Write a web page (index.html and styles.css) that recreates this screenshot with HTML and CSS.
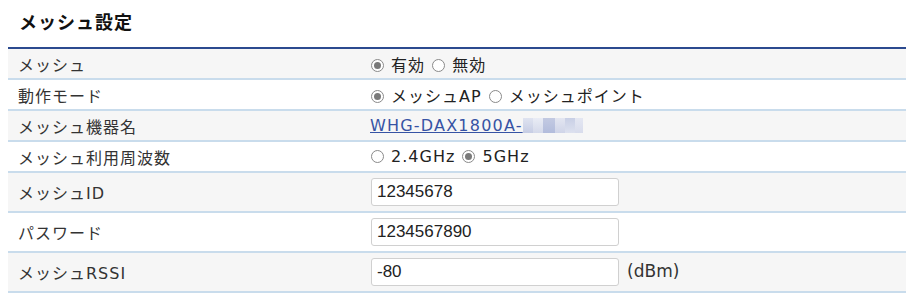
FILE: index.html
```html
<!DOCTYPE html>
<html lang="ja">
  <head>
    <meta charset="UTF-8" />
    <meta name="viewport" content="width=device-width, initial-scale=1.0" />
    <title>メッシュ設定</title>
    <link rel="stylesheet" href="styles.css">
  </head>
  <body>
    <h2 class="titel">メッシュ設定</h2>
    <table class="indstillinger">
      <tr class="lys">
        <th>メッシュ</th>
        <td>
          <label><input type="radio" name="mesh" checked /> 有効</label>
          <label><input type="radio" name="mesh" /> 無効</label>
        </td>
      </tr>
      <tr>
        <th>動作モード</th>
        <td>
          <label><input type="radio" name="mode" checked /> メッシュAP</label>
          <label><input type="radio" name="mode" /> メッシュポイント</label>
        </td>
      </tr>
      <tr class="lys">
        <th>メッシュ機器名</th>
        <td>
          <a href="#" class="link">WHG-DAX1800A-</a><span class="sloret"><i class="a"></i><i class="b"></i><i class="c"></i><i class="d"></i><i class="e"></i><i class="f"></i></span>
        </td>
      </tr>
      <tr>
        <th>メッシュ利用周波数</th>
        <td>
          <label><input type="radio" name="band" /> 2.4GHz</label>
          <label><input type="radio" name="band" checked /> 5GHz</label>
        </td>
      </tr>
      <tr class="lys hoj">
        <th>メッシュID</th>
        <td><input type="text" class="felt" value="12345678" /></td>
      </tr>
      <tr class="hoj">
        <th>パスワード</th>
        <td><input type="text" class="felt" value="1234567890" /></td>
      </tr>
      <tr class="lys hoj">
        <th>メッシュRSSI</th>
        <td><input type="text" class="felt" value="-80" /> <span class="enhed">(dBm)</span></td>
      </tr>
    </table>
  </body>
</html>
```

FILE: styles.css
```css
body {
  margin: 0;
  padding: 8px 0 0 8px;
  background-color: #ffffff;
  color: #222222;
  font-family: "DejaVu Sans", "Noto Sans CJK JP", sans-serif;
  font-size: 16px;
}
.titel {
  margin: 0 0 13px 11px;
  font-family: "Noto Sans CJK JP", sans-serif;
  font-size: 18px;
  letter-spacing: 1px;
  font-weight: bold;
  line-height: 26px;
  color: #111111;
}
.indstillinger {
  width: 898px;
  border-collapse: collapse;
  border-top: 2px solid #2b4a8f;
}
.indstillinger tr {
  height: 31px;
  border-bottom: 2px solid #c9dcec;
}
.indstillinger tr.hoj {
  height: 40px;
}
.indstillinger tr.lys {
  background-color: #f6f6f6;
}
th {
  width: 352px;
  padding: 0 0 0 10px;
  text-align: left;
  font-weight: normal;
  letter-spacing: 1px;
  color: #333333;
}
td {
  padding: 0;
  color: #222222;
}
label {
  margin-right: 1px;
  letter-spacing: 1px;
}
input[type="radio"] {
  appearance: none;
  width: 13px;
  height: 13px;
  margin: 0 1px 0 1px;
  border: 1px solid #8a8a8a;
  border-radius: 50%;
  background-color: #ffffff;
  vertical-align: -1px;
  position: relative;
}
input[type="radio"]:checked::after {
  content: "";
  position: absolute;
  left: 2px;
  top: 2px;
  width: 7px;
  height: 7px;
  border-radius: 50%;
  background-color: #7a7a7a;
}
.link {
  color: #3653a4;
  text-decoration: underline;
  letter-spacing: 1.2px;
}
.sloret {
  display: inline-flex;
  vertical-align: -2px;
}
.sloret i {
  display: inline-block;
  width: 10px;
  height: 15px;
}
.sloret .a { background: linear-gradient(#dfe3f0, #c6cde4); }
.sloret .b { background: linear-gradient(#e9ecf5, #d4d9ea); }
.sloret .c { background: linear-gradient(#c3cae2, #b2bcdc); width: 12px; }
.sloret .d { background: linear-gradient(#e3e6f1, #cfd4e8); }
.sloret .e { background: linear-gradient(#c8cfe5, #dde1ef); }
.sloret .f { background: linear-gradient(#e4e7f2, #d8dcec); width: 8px; }
.felt {
  box-sizing: border-box;
  width: 248px;
  height: 28px;
  margin: 0 0 0 1px;
  padding: 0 5px;
  border: 1px solid #d0d0d0;
  border-radius: 3px;
  background-color: #ffffff;
  font-family: "Liberation Sans", Arial, sans-serif;
  font-size: 17px;
  color: #222222;
  vertical-align: middle;
}
.enhed {
  margin-left: 3px;
  font-size: 17px;
  color: #333333;
}
```
